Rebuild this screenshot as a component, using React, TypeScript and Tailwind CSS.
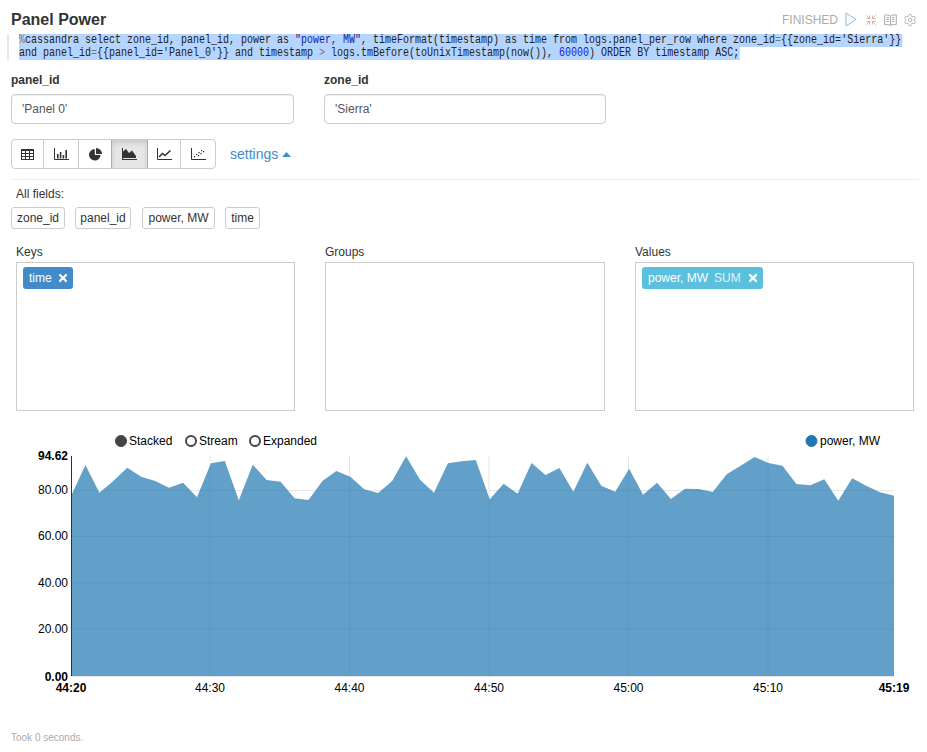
import React from "react";
import { FaTimes } from "react-icons/fa";
import { Settings } from "lucide-react";

const ys = [495,465,492.7,481,467.7,476.7,481,487.7,482.7,497.3,463.3,461,500.3,464.7,480,481.7,498.3,500,481,471,476.7,489.3,493,481,456.3,479.7,492.7,463.3,461.3,460,499.3,483.7,493.7,463,475,468,491.7,462.7,485.7,491.7,468.7,494.7,482.7,499,488.7,489,492,474.3,465.7,457,463,465.7,484,485.3,479.3,500.7,478.3,485.7,492.3,495.7];
const X0 = 71.5;
const XS = (894 - 71.5) / 59;
const OY = 430;
const pts = ys.map((y, i) => `${(X0 + XS * i).toFixed(2)},${(y - OY).toFixed(2)}`).join(" ");
const area = `${X0},${676 - OY} ${pts} 894,${676 - OY}`;

function TableIcon() {
  return (
    <svg width="13" height="11" viewBox="0 0 13 11">
      <rect x="0.5" y="0.5" width="12" height="10" fill="none" stroke="#333" />
      <rect x="0" y="0" width="13" height="2" fill="#333" />
      <path d="M4.500 2v8M8.500 2v8M1 4.500h11M1 7.500h11" stroke="#333" strokeWidth="1" />
    </svg>
  );
}
function BarIcon() {
  return (
    <svg width="15" height="12" viewBox="0 0 15 12">
      <path d="M0.500 0v11.500H15" fill="none" stroke="#333" />
      <path d="M3 6h1.600v4.500H3zM5.800 4h1.600v6.500H5.800zM8.600 7h1.600v3.500H8.600zM11.400 2h1.600v8.500h-1.600z" fill="#333" />
    </svg>
  );
}
function PieIcon() {
  return (
    <svg width="13" height="13" viewBox="0 0 13 13">
      <path d="M5.800 1A5.800 5.800 0 1 0 11.600 7H5.800z" fill="#333" />
      <path d="M7 0a6 6 0 0 1 6 6H7z" fill="#333" />
    </svg>
  );
}
function AreaIcon() {
  return (
    <svg width="15" height="12" viewBox="0 0 15 12">
      <path d="M0 11.500H15" stroke="#333" />
      <path d="M0.500 0v11" stroke="#333" />
      <path d="M1 10V3.500L4 1l3 4 3-2.500 4 5.500V10z" fill="#333" />
    </svg>
  );
}
function LineIcon() {
  return (
    <svg width="15" height="12" viewBox="0 0 15 12">
      <path d="M0.500 0v11.500H15" fill="none" stroke="#333" />
      <path d="M2 9l3.500-3.500L8 7.500 13.500 2.500" fill="none" stroke="#333" strokeWidth="1.600" />
    </svg>
  );
}
function ScatterIcon() {
  return (
    <svg width="15" height="12" viewBox="0 0 15 12">
      <path d="M0.500 0v11.500H15" fill="none" stroke="#333" />
      <path d="M3 8h1.200v1.200H3zM5 6h1.200v1.200H5zM7 7h1.200v1.200H7zM7.500 4h1.200v1.200H7.500zM9.500 5h1.200v1.200H9.500zM10 2h1.200v1.200H10zM12 3h1.200v1.200H12z" fill="#333" />
    </svg>
  );
}

const S = "text-[#1a1a99]";
const G = "text-[#777]";

export default function App() {
  return (
    <div className="relative w-[927px] h-[752px] bg-white text-[#333] overflow-hidden font-['Liberation_Sans',Arial,sans-serif]">
      <div className="flex items-center justify-between pl-[11px] pr-[9px] h-[33px] pt-[6px]">
        <div className="text-[16px] font-bold text-[#333] leading-none">Panel Power</div>
        <div className="flex items-center text-[#aaa] mr-[1px]">
          <span className="text-[12px] leading-none pt-[1px]">FINISHED</span>
          <svg width="12" height="15" viewBox="0 0 12 15" className="ml-[7px]">
            <path d="M1 1v13l10-6.500z" fill="none" stroke="#8fb8dc" strokeWidth="1" />
          </svg>
          <svg width="12" height="12" viewBox="0 0 12 12" className="ml-[8px]">
            <path d="M1 1l3.500 3.500M4.500 1.500v3h-3M11 1L7.500 4.500M7.500 1.500v3h3M1 11l3.500-3.500M4.500 10.500v-3h-3M11 11L7.500 7.500M7.500 10.500v-3h3" fill="none" stroke="#d9b8a8" strokeWidth="1" />
          </svg>
          <svg width="13" height="12" viewBox="0 0 13 12" className="ml-[7px]">
            <path d="M6.500 2C5 1 3 .8.700 1v9.500c2.300-.2 4.300 0 5.800 1 1.500-1 3.500-1.200 5.800-1V1C10 .8 8 1 6.500 2zM6.500 2v9.500M2.500 3.500h2.500M2.500 5.500h2.500M2.500 7.500h2.500M8 3.500h2.500M8 5.500h2.500M8 7.500h2.500" fill="none" stroke="#aaa" strokeWidth="1" />
          </svg>
          <Settings size={14} strokeWidth={1.5} color="#aaa" className="ml-[6px]" />
        </div>
      </div>

      <div className="ml-[7px] mt-px border-l-[2px] border-[#e8e8e8] pl-[10px] mr-[8px] h-[26px] font-['Liberation_Mono',monospace] text-[12px] leading-[13px] text-[#222] whitespace-pre">
        <div className="h-[13px] origin-left scale-x-[0.8333]">
          <span className="bg-[#b5d5ff] inline-block pr-[1px]">
            <span className={G}>%</span>cassandra select zone_id, panel_id, power as <span className={S}>"power, MW"</span>, timeFormat(timestamp) as time from logs.panel_per_row where zone_id<span className={G}>=</span>{"{{zone_id='Sierra'}}"}
          </span>
        </div>
        <div className="h-[13px] origin-left scale-x-[0.8333]">
          <span className="bg-[#b5d5ff] inline-block pr-[1px]">
            and panel_id<span className={G}>=</span>{"{{panel_id='Panel_0'}}"} and timestamp <span className={G}>&gt;</span> logs.tmBefore(toUnixTimestamp(now()), <span className="text-[#1a1ad0]">60000</span>) ORDER BY timestamp ASC;
          </span>
        </div>
      </div>

      <div className="flex pl-[11px] mt-[13px] gap-[30px]">
        {[["panel_id", "'Panel 0'", "w-[283px]"], ["zone_id", "'Sierra'", "w-[282px]"]].map(([l, v, w]) => (
          <div key={l} className={w}>
            <div className="text-[12px] font-bold leading-[14px] mb-[6px] h-[15px]">{l}</div>
            <div className="h-[30px] border border-[#ccc] rounded-[4px] flex items-center pl-[10px] text-[12px] text-[#555] shadow-[inset_0_1px_1px_rgba(0,0,0,0.075)]">{v}</div>
          </div>
        ))}
      </div>

      <div className="flex items-center pl-[11px] mt-[15px] h-[30px]">
        <div className="flex h-[30px] border border-[#ccc] rounded-[4px] w-[205px] overflow-hidden">
          <div className="w-[32px] flex items-center justify-center border-r border-[#ccc]"><TableIcon /></div>
          <div className="w-[35px] flex items-center justify-center border-r border-[#ccc]"><BarIcon /></div>
          <div className="w-[33px] flex items-center justify-center border-r border-[#adadad]"><PieIcon /></div>
          <div className="w-[36px] flex items-center justify-center border-r border-[#adadad] bg-[#e6e6e6] shadow-[inset_0_3px_5px_rgba(0,0,0,0.125)]"><AreaIcon /></div>
          <div className="w-[33px] flex items-center justify-center border-r border-[#ccc]"><LineIcon /></div>
          <div className="flex-1 flex items-center justify-center"><ScatterIcon /></div>
        </div>
        <span className="ml-[14px] text-[14px] text-[#428bca] leading-none">settings</span>
        <svg width="9" height="5" viewBox="0 0 9 5" className="ml-[4px]"><path d="M0 5L4.500 0 9 5z" fill="#428bca" /></svg>
      </div>

      <div className="ml-[11px] mr-[8px] mt-[10px] border-t border-[#eee] h-px" />

      <div className="pl-[16px] mt-[7px] text-[12px] leading-[14px] text-[#333]">All fields:</div>
      <div className="flex pl-[11px] mt-[6px] text-[12px]">
        {[["zone_id", "w-[54px] mr-[10px]"], ["panel_id", "w-[56px] mr-[11px]"], ["power, MW", "w-[73px] mr-[10px]"], ["time", "w-[35px]"]].map(([t, c]) => (
          <div key={t} className={`${c} h-[22px] border border-[#ccc] rounded-[3px] flex items-center justify-center leading-none`}>{t}</div>
        ))}
      </div>

      <div className="flex pl-[16px] mt-[15px]">
        {[["Keys", "w-[279px] mr-[30px]"], ["Groups", "w-[280px] mr-[30px]"], ["Values", "w-[279px]"]].map(([t, c]) => (
          <div key={t} className={c}>
            <div className="text-[12px] leading-[14px] h-[18px] pt-px">{t}</div>
            <div className="h-[149px] border-[1.5px] border-[#ccc] pt-[4px] pl-[6px]">
              {t === "Keys" && (
                <div className="flex items-center h-[22px] w-[50px] bg-[#428bca] text-white text-[12px] rounded-[3px] pl-[6px] gap-[5px]"><span>time</span><FaTimes size={12} /></div>
              )}
              {t === "Values" && (
                <div className="flex items-center h-[22px] w-[121px] bg-[#5bc0de] text-white text-[12px] rounded-[3px] pl-[6px] gap-[6px] whitespace-pre"><span>power, MW</span><span className="text-white/80">SUM</span><FaTimes size={12} /></div>
              )}
            </div>
          </div>
        ))}
      </div>

      <svg width="927" height="270" viewBox="0 0 927 270" className="block mt-[19px]" fontFamily="'Liberation Sans', Arial, sans-serif" fontSize="12" fill="#000">
        {[210, 349.5, 489, 628.5, 768].map((x) => (
          <line key={x} x1={x} x2={x} y1={26} y2={246} stroke="#e5e5e5" />
        ))}
        {[60.5, 106.5, 153, 199].map((y) => (
          <line key={y} x1={71} x2={894} y1={y} y2={y} stroke="#e5e5e5" />
        ))}
        <polygon points={area} fill="#1f77b4" fillOpacity="0.7" />
        <line x1="71.500" x2="71.500" y1="26" y2="246" stroke="#333" />
        <line x1="71" x2="894" y1="246.500" y2="246.500" stroke="#e5e5e5" />

        {[["94.62", 30, true], ["80.00", 64, false], ["60.00", 110, false], ["40.00", 157, false], ["20.00", 203, false], ["0.00", 250.5, true]].map(([t, y, b]) => (
          <text key={String(t)} x="68" y={Number(y)} textAnchor="end" fontWeight={b ? 700 : 400}>{t}</text>
        ))}
        {[["44:20", 71, true], ["44:30", 210, false], ["44:40", 349.5, false], ["44:50", 489, false], ["45:00", 628.5, false], ["45:10", 768, false], ["45:19", 894, true]].map(([t, x, b]) => (
          <text key={String(t)} x={Number(x)} y="262" textAnchor="middle" fontWeight={b ? 700 : 400}>{t}</text>
        ))}

        <circle cx="121" cy="11" r="5.500" fill="#444" stroke="#444" strokeWidth="1" />
        <text x="129" y="15">Stacked</text>
        <circle cx="191" cy="11" r="5" fill="#fff" stroke="#444" strokeWidth="2" />
        <text x="199" y="15">Stream</text>
        <circle cx="255" cy="11" r="5" fill="#fff" stroke="#444" strokeWidth="2" />
        <text x="263" y="15">Expanded</text>
        <circle cx="811.500" cy="11" r="5.500" fill="#1f77b4" stroke="#1f77b4" />
        <text x="820" y="15">power, MW</text>
      </svg>

      <div className="pl-[11px] mt-[32px] text-[10px] leading-[12px] text-[#aaa]">Took 0 seconds.</div>
    </div>
  );
}
